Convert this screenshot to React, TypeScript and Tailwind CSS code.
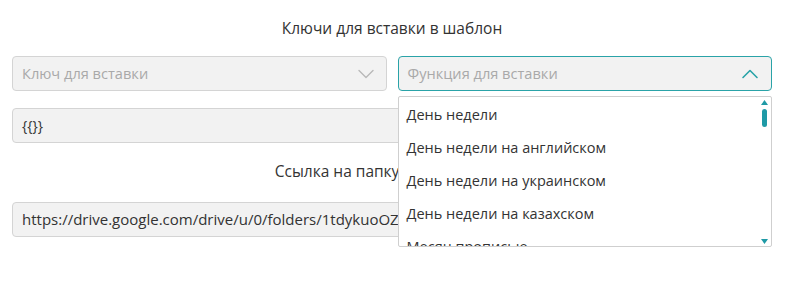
import { ChevronDown, ChevronUp } from "lucide-react";

const functions = [
  "День недели",
  "День недели на английском",
  "День недели на украинском",
  "День недели на казахском",
  "Месяц прописью",
  "Месяц на английском",
];

export default function App() {
  return (
    <div className="min-h-screen bg-white px-3 text-[#333] font-['Open_Sans',sans-serif]">
      <div className="w-[760px]">
        {/* Keys block */}
        <h2 className="pt-[18px] pb-[18px] text-center text-[15.5px] leading-[20px]">
          Ключи для вставки в шаблон
        </h2>

        <div className="grid grid-cols-2 gap-[11px]">
          <div className="flex h-[35px] items-center justify-between rounded border border-[#d4d4d4] bg-[#f2f2f2] pl-[9px] pr-[6px]">
            <span className="text-[14.6px] text-[#a9a9a9]">Ключ для вставки</span>
            <ChevronDown className="h-7 w-7 text-[#b8b8b8]" strokeWidth={1.2} />
          </div>

          <div className="relative">
            <div className="flex h-[35px] items-center justify-between rounded border border-[#2aa3a8] bg-[#f2f2f2] pl-[9px] pr-[7px]">
              <span className="text-[14.6px] text-[#a9a9a9]">Функция для вставки</span>
              <ChevronUp className="h-7 w-7 text-[#2aa3a8]" strokeWidth={1.4} />
            </div>

            {/* Open dropdown */}
            <div className="absolute left-0 right-0 top-[40px] z-10 h-[151px] overflow-hidden rounded-[2px] border border-[#cfcfcf] bg-white">
              <ul className="pt-[1px] pr-4">
                {functions.map((f) => (
                  <li key={f} className="flex h-[33px] items-center whitespace-nowrap pl-[8px] text-[14.5px]">
                    {f}
                  </li>
                ))}
              </ul>
              <div className="absolute right-[3px] top-[3px] bottom-[2px] flex w-[8px] flex-col items-center">
                <svg width="7" height="5" viewBox="0 0 7 5" className="fill-[#1f9aa6]">
                  <path d="M3.5 0 7 5H0z" />
                </svg>
                <div className="mt-[4px] h-[18px] w-[5px] rounded-full bg-[#1f9aa6]" />
                <div className="flex-1" />
                <svg width="7" height="5" viewBox="0 0 7 5" className="fill-[#1f9aa6]">
                  <path d="M0 0h7L3.5 5z" />
                </svg>
              </div>
            </div>
          </div>
        </div>

        <div className="mt-[17px] flex h-[35px] items-center rounded border border-[#d4d4d4] bg-[#f2f2f2] px-[9px] text-[14px]">
          {"{{}}"}
        </div>

        {/* Folder link */}
        <h2 className="pt-[18px] pb-[21px] text-center text-[15.5px] leading-[20px]">
          Ссылка на папку в Google Drive
        </h2>

        <div className="flex h-[35px] items-center overflow-hidden whitespace-nowrap rounded border border-[#d4d4d4] bg-[#f2f2f2] px-[9px] text-[15px]">
          https://drive.google.com/drive/u/0/folders/1tdykuoOZc8Yq3LmR2xWvN4hJkP
        </div>
      </div>
    </div>
  );
}
